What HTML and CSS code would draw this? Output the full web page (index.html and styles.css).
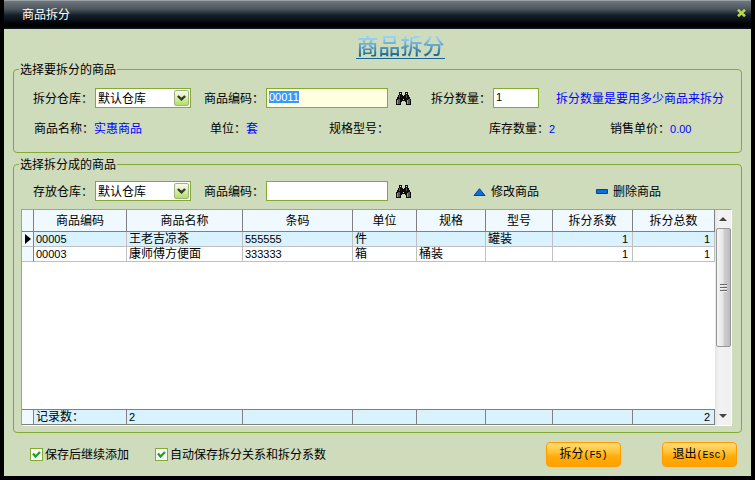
FILE: index.html
```html
<!DOCTYPE html>
<html lang="zh-CN">
<head>
  <meta charset="UTF-8" />
  <meta name="viewport" content="width=device-width, initial-scale=1" />
  <title>商品拆分</title>
  <link rel="stylesheet" href="styles.css">
</head>
<body>
  <svg width="0" height="0" class="sprite" aria-hidden="true">
    <symbol id="binoculars" viewBox="0 0 15 13" shape-rendering="crispEdges">
      <path fill="#0c0c0c" d="M3 0h3v3h1v1h1V3h1V0h3v3h1v2h1v2h1v6h-5v-3H9V9H6v1H5v3H0V7h1V5h1V3h1z"/>
      <path fill="#cfdcbc" d="M7 7h1v1H7z"/>
      <path fill="#eee" d="M4 1h1v1H4zM10 1h1v1h-1z"/>
      <path fill="#555" d="M3 3h1v3H3zM10 3h1v3h-1zM2 7h2v5H2zM12 7h2v5h-2z"/>
      <path fill="#999" d="M1 8h1v4H1zM11 8h1v4h-1z"/>
    </symbol>
    <symbol id="chevron" viewBox="0 0 9 6">
      <path fill="none" stroke="#363b2c" stroke-width="2.4" d="M.9 1l3.6 3.4L8.1 1"/>
    </symbol>
  </svg>

  <header class="titlebar">
    <span class="titlebar-text">商品拆分</span>
    <button class="close-btn" aria-label="关闭">
      <svg width="9" height="8" viewBox="0 0 9 8"><path d="M1 .8l7 6.4M8 .8L1 7.2" stroke="#b4dc4a" stroke-width="2.6"/></svg>
    </button>
  </header>

  <main>
    <h1><span>商品拆分</span></h1>

    <!-- 源商品 -->
    <fieldset class="source">
      <legend>选择要拆分的商品</legend>
      <div class="row">
        <label for="srcStore">拆分仓库：</label>
        <span class="combo">
          <select id="srcStore"><option>默认仓库</option></select>
          <span class="combo-arrow"><svg width="9" height="6"><use href="#chevron"/></svg></span>
        </span>
        <label class="next" for="srcCode">商品编码：</label>
        <input type="text" class="code" id="srcCode" value="00011" />
        <button class="find" aria-label="查找商品"><svg width="15" height="13"><use href="#binoculars"/></svg></button>
        <label class="qty-label" for="qty">拆分数量：</label>
        <input type="text" class="qty" id="qty" value="1" />
        <span class="hint">拆分数量是要用多少商品来拆分</span>
      </div>
      <div class="info">
        <span>商品名称：<b>实惠商品</b></span>
        <span>单位：<b>套</b></span>
        <span>规格型号：</span>
        <span>库存数量：<b class="num">2</b></span>
        <span>销售单价：<b class="num">0.00</b></span>
      </div>
    </fieldset>

    <!-- 拆分成的商品 -->
    <fieldset class="target">
      <legend>选择拆分成的商品</legend>
      <div class="row">
        <label for="dstStore">存放仓库：</label>
        <span class="combo">
          <select id="dstStore"><option>默认仓库</option></select>
          <span class="combo-arrow"><svg width="9" height="6"><use href="#chevron"/></svg></span>
        </span>
        <label class="next" for="dstCode">商品编码：</label>
        <input type="text" class="code" id="dstCode" />
        <button class="find" aria-label="查找商品"><svg width="15" height="13"><use href="#binoculars"/></svg></button>
        <button class="tool edit">
          <svg width="13" height="8" viewBox="0 0 13 8"><path d="M6.5.7L12 7.5H1z" fill="#0a6fd8" stroke="#0a3d9c"/></svg>修改商品
        </button>
        <button class="tool remove">
          <svg width="12" height="5" viewBox="0 0 12 5"><path d="M.5.5h11v4H.5z" fill="#0a6fd8" stroke="#0a3d9c"/></svg>删除商品
        </button>
      </div>

      <div class="grid">
        <div class="grid-body">
          <table>
            <colgroup>
              <col class="c-mark"><col class="c-code"><col><col class="c-bar"><col class="c-unit">
              <col class="c-spec"><col class="c-model"><col class="c-ratio"><col class="c-total">
            </colgroup>
            <thead>
              <tr><th></th><th>商品编码</th><th>商品名称</th><th>条码</th><th>单位</th><th>规格</th><th>型号</th><th>拆分系数</th><th>拆分总数</th></tr>
            </thead>
            <tbody>
              <tr class="current">
                <td class="mark"><svg width="6" height="10" viewBox="0 0 6 10"><path d="M0 0l6 5-6 5z"/></svg></td>
                <td class="num">00005</td><td>王老吉凉茶</td><td class="num">555555</td><td>件</td><td></td><td>罐装</td><td class="num right">1</td><td class="num right">1</td>
              </tr>
              <tr>
                <td class="mark"></td>
                <td class="num">00003</td><td>康师傅方便面</td><td class="num">333333</td><td>箱</td><td>桶装</td><td></td><td class="num right">1</td><td class="num right">1</td>
              </tr>
              <tr class="blank"><td colspan="9"></td></tr>
            </tbody>
            <tfoot>
              <tr><td class="mark"></td><td>记录数：</td><td class="num">2</td><td></td><td></td><td></td><td></td><td></td><td class="num right">2</td></tr>
            </tfoot>
          </table>
        </div>
        <div class="scrollbar" aria-hidden="true">
          <span class="arrow"><svg width="8" height="4" viewBox="0 0 8 4"><path d="M0 4l4-4 4 4z" fill="#444"/></svg></span>
          <span class="thumb"><i></i><i></i><i></i></span>
          <span class="track"></span>
          <span class="arrow"><svg width="8" height="4" viewBox="0 0 8 4"><path d="M0 0h8L4 4z" fill="#444"/></svg></span>
        </div>
      </div>
    </fieldset>
  </main>

  <footer>
    <label class="check"><input type="checkbox" checked />保存后继续添加</label>
    <label class="check"><input type="checkbox" checked />自动保存拆分关系和拆分系数</label>
    <button class="btn">拆分<span>(F5)</span></button>
    <button class="btn">退出<span>(Esc)</span></button>
  </footer>

<script>
  // 打开窗口时选中商品编码
  const srcCode = document.getElementById('srcCode');
  srcCode.focus();
  srcCode.select();
</script>
</body>
</html>
```

FILE: styles.css
```css
* {
  box-sizing: border-box;
}
body {
  margin: 0;
  min-height: 100vh;
  display: flex;
  flex-direction: column;
  background: #cfdcbc;
  border: 4px solid #000;
  border-top: 0;
  color: #000;
  font-family: "Liberation Sans", "Noto Sans CJK SC", sans-serif;
  font-size: 12px;
  line-height: 14px;
}
button, input, select {
  font: inherit;
  color: inherit;
  margin: 0;
}
button {
  border: 0;
  padding: 0;
  background: none;
  cursor: pointer;
}
svg {
  display: block;
}
.sprite {
  position: absolute;
}
.num {
  font-size: 11px;
}

/* 标题栏 */
.titlebar {
  height: 29px;
  display: flex;
  align-items: center;
  justify-content: space-between;
  padding: 0 5px 0 20px;
  margin: 0 -2px;
  background: linear-gradient(#6d777e 0, #4d565d 8px, #17212b 14px, #0a1016 19px, #000 23px, #000 26px, #141c26 28px);
  border-top: 1px solid #9aa1a6;
  color: #fff;
}
.close-btn {
  margin-top: -4px;
  padding: 2px;
}

main {
  flex: 1;
  padding: 0 9px;
}
h1 {
  margin: 0;
  height: 33px;
  padding: 7px 0 0 46px;
  text-align: center;
  font-size: 22px;
  font-weight: 500;
  line-height: 22px;
}
h1 span {
  display: inline-block;
  background: linear-gradient(#93d3f5 2px, #17658f 20px);
  -webkit-background-clip: text;
  background-clip: text;
  color: transparent;
  border-bottom: 1px solid #17658f;
}

fieldset {
  margin: 0;
  min-width: 0;
  border: 1px solid #83ab33;
  border-radius: 4px;
  padding: 12px 0 16px;
}
legend {
  margin-left: 5px;
  padding: 2px 1px 0;
  line-height: 12px;
}
.source {
  margin-bottom: 4px;
}
.target {
  padding: 10px 0 6px;
}
.row {
  display: flex;
  align-items: center;
  padding-left: 19px;
  white-space: nowrap;
}
.row label, .hint, .tool {
  padding-top: 1px;
}
.row label {
  width: 62px;
}
.row .next {
  margin-left: 13px;
}
.row input, .combo select {
  height: 20px;
  border: 1px solid #83ab33;
  border-radius: 0;
  background: #fff;
  padding: 1px 2px 0;
  outline: none;
}
.row input {
  font-size: 11px;
  padding: 0 2px 2px;
}
.row input:focus {
  background: #ffffe1;
}
.row input::selection {
  background: rgba(51, 153, 255, 0.99);
  color: #fff;
}
.code {
  width: 122px;
}
.qty {
  width: 46px;
}
.combo {
  position: relative;
}
.combo select {
  display: block;
  appearance: none;
  width: 96px;
}
.combo-arrow {
  position: absolute;
  top: 2px;
  right: 2px;
  width: 15px;
  height: 16px;
  display: flex;
  align-items: center;
  justify-content: center;
  border: 1px solid #a3b18a;
  border-radius: 2px;
  background: linear-gradient(#f7fbe9, #d9eeb0 50%, #b0e05c);
  pointer-events: none;
}
.find {
  margin-left: 8px;
}
.qty-label {
  margin-left: 20px;
}
.hint {
  margin-left: 17px;
  color: #00f;
}
.info {
  display: grid;
  grid-template-columns: 176px 119px 160px 121px auto;
  padding: 2px 0 0 20px;
  margin-top: 12px;
  line-height: 14px;
}
.info b {
  font-weight: normal;
  color: #00f;
}
.tool {
  display: flex;
  align-items: center;
  gap: 5px;
}
.edit {
  margin-left: 62px;
}
.remove {
  margin-left: 57px;
}

/* 表格 */
.grid {
  display: flex;
  margin: 8px 9px 0 7px;
  background: #fff;
  border: 1px solid #fff;
  border-top-color: #a0a0a0;
  border-left-color: #a0a0a0;
}
.grid-body {
  flex: 1;
}
table {
  width: 100%;
  table-layout: fixed;
  border-collapse: separate;
  border-spacing: 0;
}
.c-mark { width: 12px; }
.c-code { width: 93px; }
.c-bar { width: 110px; }
.c-unit { width: 64px; }
.c-spec { width: 69px; }
.c-model { width: 67px; }
.c-ratio { width: 80px; }
.c-total { width: 82px; }
th, td {
  height: 15px;
  padding: 0 2px;
  line-height: 14px;
  text-align: left;
  white-space: nowrap;
  overflow: hidden;
  border-right: 1px solid #c0c0c0;
  border-bottom: 1px solid #c0c0c0;
}
th {
  height: 22px;
  font-weight: normal;
  text-align: center;
  background: #f0f9ff;
  border-color: #808080;
}
td.right {
  text-align: right;
  padding-right: 4px;
}
.current td, tfoot td {
  background: #d9f2ff;
}
td.mark {
  background: #f0f9ff;
  border-right-color: #808080;
  padding: 0 0 0 3px;
}
.blank td {
  height: 148px;
  border-right: 0;
  border-bottom-color: #808080;
}
tfoot td {
  border-color: #808080;
}
.scrollbar {
  width: 16px;
  display: flex;
  flex-direction: column;
  background: linear-gradient(90deg, #e6e6e6, #f2f2f2 4px, #f0f0f0);
}
.arrow {
  height: 18px;
  display: flex;
  align-items: center;
  justify-content: center;
}
.thumb {
  height: 119px;
  margin-left: 1px;
  display: flex;
  flex-direction: column;
  align-items: center;
  justify-content: center;
  gap: 1px;
  border: 1px solid #979797;
  border-radius: 2px;
  background: linear-gradient(90deg, #f5f5f5, #e6e6e8 45%, #cfcfd2 55%, #bcbcc0);
}
.thumb i {
  width: 7px;
  height: 2px;
  background: #666;
  border-bottom: 1px solid #eee;
}
.track {
  flex: 1;
}

/* 底部 */
footer {
  height: 43px;
  display: flex;
  align-items: center;
  padding: 0 14px 0 26px;
}
.check {
  display: flex;
  align-items: center;
  gap: 2px;
  margin-right: 26px;
}
.check input {
  appearance: none;
  width: 13px;
  height: 13px;
  border: 1px solid #83ab33;
  background: #f6f6f6;
}
.check input:checked {
  background: #f6f6f6 url("data:image/svg+xml,%3Csvg xmlns='http://www.w3.org/2000/svg' width='11' height='11'%3E%3Cpath d='M2 4.5l2.5 3L9 3' fill='none' stroke='%2321a121' stroke-width='2.2'/%3E%3C/svg%3E") center no-repeat;
}
.btn {
  width: 75px;
  height: 25px;
  border: 1px solid #ff9c00;
  border-radius: 4px;
  background: linear-gradient(#ffdc7a, #ffc232 40%, #ffab0a 60%, #ffa200);
}
.btn span {
  font-family: "Liberation Mono", monospace;
  font-size: 10px;
}
.check + .btn {
  margin-left: auto;
}
.btn + .btn {
  margin-left: 41px;
}
```
